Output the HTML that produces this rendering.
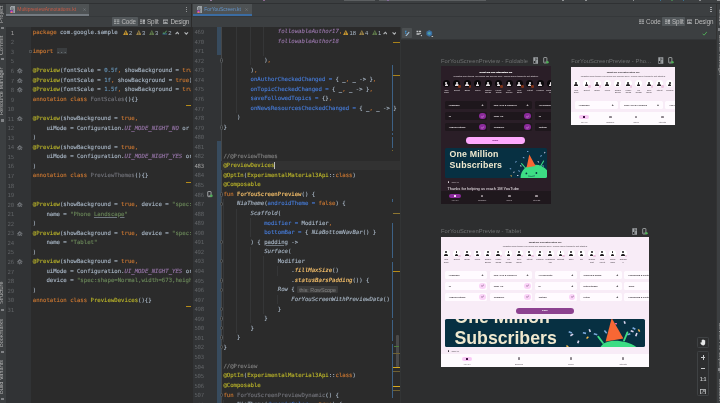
<!DOCTYPE html>
<html lang="en"><head><meta charset="utf-8"><title>ForYouScreen.kt - Multipreview</title>
<style>
html,body{margin:0;padding:0}
body{width:720px;height:403px;overflow:hidden;background:#2b2b2b;position:relative;font-family:"Liberation Sans",sans-serif;color:#bbbbbb}
.abs{position:absolute}
div,span,svg{box-sizing:border-box}
.code{position:absolute;white-space:pre;margin-top:.3px;font-family:"DejaVu Sans Mono","Liberation Mono",monospace;font-size:5.65px;line-height:9.555px;height:9.555px;color:#a9b7c6;letter-spacing:0;-webkit-text-stroke:.12px}
.ln{position:absolute;white-space:pre;font-family:"DejaVu Sans Mono","Liberation Mono",monospace;font-size:5.65px;line-height:9.555px;height:9.555px;color:#606366;text-align:right;margin-top:1px;letter-spacing:-.25px}
.k{color:#cc7832}.a{color:#bbb529}.n{color:#6897bb}.s{color:#6a8759}.c{color:#808080}
.p{color:#9876aa;font-style:italic}.f{color:#ffc66d}.b{color:#467cda}.u{color:#72737a}
.i{font-style:italic}.e{color:#ffc66d;font-style:italic}
.ul{text-decoration:underline;text-decoration-thickness:.35px;text-underline-offset:.8px;text-decoration-color:rgba(169,183,198,.55)}
.fold{background:#3a3d3f;color:#808a8f}
.h{background:#3b3b3b;color:#787878;font-family:"Liberation Sans",sans-serif;font-size:5.3px;border-radius:1px;padding:.6px 1.8px;margin-left:2.6px}
.ui{position:absolute;white-space:pre;font-family:"Liberation Sans",sans-serif;font-size:6.3px;line-height:8px;color:#bbbbbb;letter-spacing:-.14px}
.vt{position:absolute;white-space:pre;font-family:"Liberation Sans",sans-serif;font-size:5.6px;line-height:6px;color:#b4b4b4;transform-origin:0 0;transform:rotate(-90deg)}
.vtr{position:absolute;white-space:pre;font-family:"Liberation Sans",sans-serif;font-size:5.6px;line-height:6px;color:#aaaaaa;transform-origin:0 0;transform:rotate(90deg)}
.pv{position:absolute;overflow:hidden}
.pl{position:absolute;white-space:pre;font-family:"Liberation Sans",sans-serif;font-size:5.75px;line-height:8px;color:#6f7172;letter-spacing:.1px}
.tx{position:absolute;white-space:pre;font-family:"Liberation Sans",sans-serif}
.card{position:absolute;border-radius:1.6px}
.av{position:absolute;border-radius:50%;width:7px;height:7px;overflow:hidden}
.av i{position:absolute;left:2.35px;top:1.3px;width:1.9px;height:1.9px;border-radius:50%}
.av b{position:absolute;left:1.5px;top:3.6px;width:3.6px;height:2px;border-radius:1.6px 1.6px .3px .3px}
.dk .av{background:#0b090b}.dk .av i,.dk .av b{background:#ece6ea}
.lt .av{background:#ffffff}.lt .av i,.lt .av b{background:#1d1a1d}
.nm{position:absolute;white-space:pre;font-family:"Liberation Sans",sans-serif;font-size:2.15px;line-height:2.6px;text-align:center;width:10px}
.dk .nm{color:#f1e9ee}.lt .nm{color:#3a333a}
.ct{position:absolute;white-space:pre;font-family:"Liberation Sans",sans-serif;font-size:2.3px;line-height:3px;font-weight:bold;margin-top:.4px}
.dk .ct{color:#f4edf2}.lt .ct{color:#3b343b}
.ck{position:absolute;border-radius:50%;width:6.4px;height:6.4px}
</style></head><body><div id="root" style="position:absolute;left:0;top:0;width:720px;height:403px;transform:translateZ(0);will-change:transform">
<div class="abs" style="left:0;top:0;width:720px;height:27px;background:#3c3f41"></div><div class="abs" style="left:0;top:2.8px;width:720px;height:.8px;background:#2f3133"></div><div class="abs" style="left:0;top:15.8px;width:720px;height:.6px;background:#35383a"></div><div class="abs" style="left:344px;top:0;width:31px;height:1.2px;background:#4a4d4f;border-bottom:.5px solid #5c5f61"></div><div class="abs" style="left:379px;top:0;width:107px;height:1.2px;background:#4a4d4f;border-bottom:.5px solid #5c5f61"></div><div class="abs" style="left:210.2px;top:0;width:1.5px;height:.9px;background:#d6a6dc;opacity:.6"></div><div class="abs" style="left:263.2px;top:0;width:1.5px;height:.9px;background:#c486c8;opacity:.6"></div><div class="abs" style="left:387.2px;top:0;width:1.5px;height:.9px;background:#a070c0;opacity:.6"></div><div class="abs" style="left:562.2px;top:0;width:1.5px;height:.9px;background:#c8cacc;opacity:.6"></div><div class="abs" style="left:585.2px;top:0;width:1.5px;height:.9px;background:#c8cacc;opacity:.6"></div><div class="abs" style="left:632.7px;top:0;width:1.5px;height:.9px;background:#c8cacc;opacity:.6"></div><div class="abs" style="left:659.8000000000001px;top:0;width:1.5px;height:.9px;background:#3592c4;opacity:.6"></div><div class="abs" style="left:671.2px;top:0;width:1.5px;height:.9px;background:#499c54;opacity:.6"></div><div class="abs" style="left:682.7px;top:0;width:1.5px;height:.9px;background:#3592c4;opacity:.6"></div><div class="abs" style="left:699.2px;top:0;width:1.5px;height:.9px;background:#c8cacc;opacity:.6"></div><div class="abs" style="left:716.5px;top:0;width:3.5px;height:1px;background:#c8cacc;opacity:.6"></div><div class="abs" style="left:0;top:3.5px;width:5.5px;height:400px;background:#3c3f41;overflow:hidden"><div class="vt" style="left:-1.6px;top:19.0px">Project</div><div class="vt" style="left:-1.6px;top:51.0px">Commit</div><div class="vt" style="left:-1.6px;top:111.0px">Resource Manager</div><div class="vt" style="left:-1.6px;top:300.5px">Structure</div><div class="vt" style="left:-1.6px;top:343.5px">Bookmarks</div><div class="vt" style="left:-1.6px;top:390.5px">Build Variants</div><div class="abs" style="left:.5px;top:23.1px;width:3.6px;height:2.8px;background:#9da0a2;opacity:.7"></div><div class="abs" style="left:.5px;top:54.0px;width:3.6px;height:2.8px;background:#9da0a2;opacity:.7"></div><div class="abs" style="left:.5px;top:115.5px;width:3.6px;height:2.8px;background:#9da0a2;opacity:.7"></div><div class="abs" style="left:.5px;top:305.0px;width:3.6px;height:2.8px;background:#9da0a2;opacity:.7"></div><div class="abs" style="left:.5px;top:347.0px;width:3.6px;height:2.8px;background:#9da0a2;opacity:.7"></div><div class="abs" style="left:.5px;top:394.0px;width:3.6px;height:2.8px;background:#9da0a2;opacity:.7"></div></div><div class="abs" style="left:716.3px;top:3.5px;width:3.7px;height:400px;background:#3c3f41;border-left:.6px solid #323232;overflow:hidden"><div class="vtr" style="left:7px;top:5.5px">Gradle</div><div class="vtr" style="left:7px;top:31px">Device Manager</div><div class="vtr" style="left:7px;top:319px">Device File Explorer</div><div class="vtr" style="left:7px;top:375px">Emulator</div><div class="abs" style="left:1px;top:24.5px;width:2.6px;height:2.6px;background:#9da0a2;opacity:.7"></div><div class="abs" style="left:1px;top:364.5px;width:2.6px;height:2.6px;background:#9da0a2;opacity:.7"></div></div><div class="abs" style="left:5.5px;top:3.6px;width:83.7px;height:12.4px;background:#4e5254"></div><div class="abs" style="left:5.5px;top:14.2px;width:83.7px;height:1.8px;background:#747a80"></div><svg class="abs" style="left:9.8px;top:5.6px" width="5.4" height="7.6" viewBox="0 0 11 15"><path d="M3 0h8v15H0V3z" fill="#9aa0a4"/><path d="M0 3 3 0v3z" fill="#c9cdd0"/><path d="M2 2.8h3.600v1.400H2zM2 5.600h6v1.200H2z" fill="#5a5e61"/><rect x="0" y="8" width="6.5" height="7" fill="#3c3f41"/><path d="M.6 8.800h5v5h-5z" fill="#c34ddc"/><path d="M.6 13.800 3.200 11.200 5.600 13.800z" fill="#f28b3d"/></svg><div class="ui" style="left:17.3px;top:5.5px;font-size:4.95px;letter-spacing:0;color:#c75a45">MultipreviewAnnotations.kt</div><svg class="abs" style="left:82.60000000000001px;top:8px" width="3.2" height="3.2" viewBox="0 0 8 8"><path d="M1 1l6 6M7 1 1 7" stroke="#7e8385" stroke-width="1.3" fill="none"/></svg><div class="abs" style="left:192.5px;top:3.6px;width:59.5px;height:12.4px;background:#4e5254"></div><div class="abs" style="left:192.5px;top:14.2px;width:59.5px;height:1.8px;background:#3b6ca2"></div><svg class="abs" style="left:196.8px;top:5.6px" width="5.4" height="7.6" viewBox="0 0 11 15"><path d="M3 0h8v15H0V3z" fill="#9aa0a4"/><path d="M0 3 3 0v3z" fill="#c9cdd0"/><path d="M2 2.8h3.600v1.400H2zM2 5.600h6v1.200H2z" fill="#5a5e61"/><rect x="0" y="8" width="6.5" height="7" fill="#3c3f41"/><path d="M.6 8.800h5v5h-5z" fill="#c34ddc"/><path d="M.6 13.800 3.200 11.200 5.600 13.800z" fill="#f28b3d"/></svg><div class="ui" style="left:204.3px;top:5.5px;font-size:4.95px;letter-spacing:0;color:#6294cb">ForYouScreen.kt</div><svg class="abs" style="left:245.4px;top:8px" width="3.2" height="3.2" viewBox="0 0 8 8"><path d="M1 1l6 6M7 1 1 7" stroke="#7e8385" stroke-width="1.3" fill="none"/></svg><div class="abs" style="left:186.04999999999998px;top:6.6px;width:1.1px;height:1.1px;border-radius:50%;background:#afb1b3"></div><div class="abs" style="left:186.04999999999998px;top:8.8px;width:1.1px;height:1.1px;border-radius:50%;background:#afb1b3"></div><div class="abs" style="left:186.04999999999998px;top:11.0px;width:1.1px;height:1.1px;border-radius:50%;background:#afb1b3"></div><div class="abs" style="left:710.45px;top:6.6px;width:1.1px;height:1.1px;border-radius:50%;background:#afb1b3"></div><div class="abs" style="left:710.45px;top:8.8px;width:1.1px;height:1.1px;border-radius:50%;background:#afb1b3"></div><div class="abs" style="left:710.45px;top:11.0px;width:1.1px;height:1.1px;border-radius:50%;background:#afb1b3"></div><div class="abs" style="left:111.80000000000001px;top:16.8px;width:25.799999999999983px;height:9.4px;background:#53585b;border-radius:.8px"></div><svg class="abs" style="left:114.4px;top:18.7px" width="5.4" height="5.4" viewBox="0 0 10 10"><path d="M0 1h10v1.600H0zM0 4.200h10v1.600H0zM0 7.400h10v1.600H0z" fill="#afb1b3"/><path d="M4.400 1h1.200v8H4.400z" fill="#4c5052"/></svg><div class="ui" style="left:121.4px;top:18px">Code</div><svg class="abs" style="left:140px;top:18.7px" width="5.4" height="5.4" viewBox="0 0 10 10"><path d="M0 1h4v1.600H0zM0 4.200h4v1.600H0zM0 7.400h4v1.600H0z" fill="#afb1b3"/><rect x="5" y="1" width="5" height="8" fill="#afb1b3"/><path d="M6.200 6.800 7.600 4.400l1.400 2.400z" fill="#4c5052"/></svg><div class="ui" style="left:147px;top:18px">Split</div><svg class="abs" style="left:163px;top:18.7px" width="5.4" height="5.4" viewBox="0 0 10 10"><rect x="0" y="1" width="10" height="8" fill="#afb1b3"/><rect x="1.2" y="3" width="7.600" height="4.800" fill="#3c3f41"/><path d="M1.600 7.800 4 4.400l1.700 2.200 1-1.100 1.900 2.300z" fill="#afb1b3"/></svg><div class="ui" style="left:170.4px;top:18px">Design</div><div class="abs" style="left:662px;top:16.8px;width:23.200000000000045px;height:9.4px;background:#53585b;border-radius:.8px"></div><svg class="abs" style="left:638.6px;top:18.7px" width="5.4" height="5.4" viewBox="0 0 10 10"><path d="M0 1h10v1.600H0zM0 4.200h10v1.600H0zM0 7.400h10v1.600H0z" fill="#afb1b3"/><path d="M4.400 1h1.200v8H4.400z" fill="#4c5052"/></svg><div class="ui" style="left:646px;top:18px">Code</div><svg class="abs" style="left:665px;top:18.7px" width="5.4" height="5.4" viewBox="0 0 10 10"><path d="M0 1h4v1.600H0zM0 4.200h4v1.600H0zM0 7.400h4v1.600H0z" fill="#afb1b3"/><rect x="5" y="1" width="5" height="8" fill="#afb1b3"/><path d="M6.200 6.800 7.600 4.400l1.400 2.400z" fill="#4c5052"/></svg><div class="ui" style="left:672px;top:18px">Split</div><svg class="abs" style="left:687px;top:18.7px" width="5.4" height="5.4" viewBox="0 0 10 10"><rect x="0" y="1" width="10" height="8" fill="#afb1b3"/><rect x="1.2" y="3" width="7.600" height="4.800" fill="#3c3f41"/><path d="M1.600 7.800 4 4.400l1.700 2.200 1-1.100 1.900 2.300z" fill="#afb1b3"/></svg><div class="ui" style="left:694.6px;top:18px">Design</div><div class="abs" style="left:5.5px;top:27px;width:185.7px;height:376px;background:#2b2b2b;overflow:hidden"><div class="abs" style="left:0;top:0;width:25px;height:376px;background:#313335"></div><div class="ln" style="left:0;top:0.72px;width:8.3px;color:#a4a3a3">1</div><div class="code" style="left:27.3px;top:0.72px"><span class="k">package</span> com.google.sample</div><div class="ln" style="left:0;top:10.28px;width:8.3px;color:#606366">2</div><div class="ln" style="left:0;top:19.83px;width:8.3px;color:#606366">3</div><div class="code" style="left:27.3px;top:19.83px"><span class="k">import</span> <span class="fold">...</span></div><div class="ln" style="left:0;top:29.39px;width:8.3px;color:#606366">5</div><div class="ln" style="left:0;top:38.94px;width:8.3px;color:#606366">6</div><svg class="abs" style="left:11.60px;top:41.12px" width="5.6" height="5.6" viewBox="0 0 12 12"><g fill="none" stroke="#959a9f"><circle cx="6" cy="6" r="2.7" stroke-width="1.5"/><path stroke-width="1.7" d="M6 .4v2.200M6 9.400v2.200M.4 6h2.200M9.400 6h2.200M2 2l1.500 1.500M8.500 8.500 10 10M2 10l1.500-1.500M8.500 3.500 10 2"/></g></svg><div class="code" style="left:27.3px;top:38.94px"><span class="a">@Preview</span>(fontScale = <span class="n">0.5f</span><span class="k">,</span> showBackground = <span class="k">true</span>)</div><div class="ln" style="left:0;top:48.50px;width:8.3px;color:#606366">7</div><svg class="abs" style="left:11.60px;top:50.68px" width="5.6" height="5.6" viewBox="0 0 12 12"><g fill="none" stroke="#959a9f"><circle cx="6" cy="6" r="2.7" stroke-width="1.5"/><path stroke-width="1.7" d="M6 .4v2.200M6 9.400v2.200M.4 6h2.200M9.400 6h2.200M2 2l1.500 1.500M8.500 8.500 10 10M2 10l1.500-1.500M8.500 3.500 10 2"/></g></svg><div class="code" style="left:27.3px;top:48.50px"><span class="a">@Preview</span>(fontScale = <span class="n">1f</span><span class="k">,</span> showBackground = <span class="k">true</span>)</div><div class="ln" style="left:0;top:58.05px;width:8.3px;color:#606366">8</div><svg class="abs" style="left:11.60px;top:60.23px" width="5.6" height="5.6" viewBox="0 0 12 12"><g fill="none" stroke="#959a9f"><circle cx="6" cy="6" r="2.7" stroke-width="1.5"/><path stroke-width="1.7" d="M6 .4v2.200M6 9.400v2.200M.4 6h2.200M9.400 6h2.200M2 2l1.500 1.500M8.500 8.500 10 10M2 10l1.500-1.500M8.500 3.500 10 2"/></g></svg><div class="code" style="left:27.3px;top:58.05px"><span class="a">@Preview</span>(fontScale = <span class="n">1.5f</span><span class="k">,</span> showBackground = <span class="k">true</span>)</div><div class="ln" style="left:0;top:67.61px;width:8.3px;color:#606366">9</div><div class="code" style="left:27.3px;top:67.61px"><span class="k">annotation class </span><span class="u">FontScales</span>(){}</div><div class="ln" style="left:0;top:77.16px;width:8.3px;color:#606366">10</div><div class="ln" style="left:0;top:86.72px;width:8.3px;color:#606366">11</div><svg class="abs" style="left:11.60px;top:88.90px" width="5.6" height="5.6" viewBox="0 0 12 12"><g fill="none" stroke="#959a9f"><circle cx="6" cy="6" r="2.7" stroke-width="1.5"/><path stroke-width="1.7" d="M6 .4v2.200M6 9.400v2.200M.4 6h2.200M9.400 6h2.200M2 2l1.500 1.500M8.500 8.500 10 10M2 10l1.500-1.500M8.500 3.500 10 2"/></g></svg><div class="code" style="left:27.3px;top:86.72px"><span class="a">@Preview</span>(showBackground = <span class="k">true,</span></div><div class="ln" style="left:0;top:96.27px;width:8.3px;color:#606366">12</div><div class="code" style="left:27.3px;top:96.27px">    uiMode = Configuration.<span class="p">UI_MODE_NIGHT_NO</span> or Configuration.<span class="p">UI_MODE_TYPE_NORMAL</span></div><div class="ln" style="left:0;top:105.83px;width:8.3px;color:#606366">13</div><div class="code" style="left:27.3px;top:105.83px">)</div><div class="ln" style="left:0;top:115.38px;width:8.3px;color:#606366">14</div><svg class="abs" style="left:11.60px;top:117.56px" width="5.6" height="5.6" viewBox="0 0 12 12"><g fill="none" stroke="#959a9f"><circle cx="6" cy="6" r="2.7" stroke-width="1.5"/><path stroke-width="1.7" d="M6 .4v2.200M6 9.400v2.200M.4 6h2.200M9.400 6h2.200M2 2l1.500 1.500M8.500 8.500 10 10M2 10l1.500-1.500M8.500 3.500 10 2"/></g></svg><div class="code" style="left:27.3px;top:115.38px"><span class="a">@Preview</span>(showBackground = <span class="k">true,</span></div><div class="ln" style="left:0;top:124.94px;width:8.3px;color:#606366">15</div><div class="code" style="left:27.3px;top:124.94px">    uiMode = Configuration.<span class="p">UI_MODE_NIGHT_YES</span> or Configuration.<span class="p">UI_MODE_TYPE_NORMAL</span></div><div class="ln" style="left:0;top:134.49px;width:8.3px;color:#606366">16</div><div class="code" style="left:27.3px;top:134.49px">)</div><div class="ln" style="left:0;top:144.05px;width:8.3px;color:#606366">17</div><div class="code" style="left:27.3px;top:144.05px"><span class="k">annotation class </span><span class="u">PreviewThemes</span>(){}</div><div class="ln" style="left:0;top:153.60px;width:8.3px;color:#606366">18</div><div class="ln" style="left:0;top:163.16px;width:8.3px;color:#606366">19</div><div class="ln" style="left:0;top:172.71px;width:8.3px;color:#606366">20</div><svg class="abs" style="left:11.60px;top:174.89px" width="5.6" height="5.6" viewBox="0 0 12 12"><g fill="none" stroke="#959a9f"><circle cx="6" cy="6" r="2.7" stroke-width="1.5"/><path stroke-width="1.7" d="M6 .4v2.200M6 9.400v2.200M.4 6h2.200M9.400 6h2.200M2 2l1.500 1.500M8.500 8.500 10 10M2 10l1.500-1.500M8.500 3.500 10 2"/></g></svg><div class="code" style="left:27.3px;top:172.71px"><span class="a">@Preview</span>(showBackground = <span class="k">true,</span> device = <span class="s">"spec:shape=Normal,width=673,height=841,unit=dp,dpi=480"</span><span class="k">,</span></div><div class="ln" style="left:0;top:182.27px;width:8.3px;color:#606366">21</div><div class="code" style="left:27.3px;top:182.27px">    name = <span class="s">"Phone </span><span class="s ul">Landscape</span><span class="s">"</span></div><div class="ln" style="left:0;top:191.82px;width:8.3px;color:#606366">22</div><div class="code" style="left:27.3px;top:191.82px">)</div><div class="ln" style="left:0;top:201.38px;width:8.3px;color:#606366">23</div><svg class="abs" style="left:11.60px;top:203.55px" width="5.6" height="5.6" viewBox="0 0 12 12"><g fill="none" stroke="#959a9f"><circle cx="6" cy="6" r="2.7" stroke-width="1.5"/><path stroke-width="1.7" d="M6 .4v2.200M6 9.400v2.200M.4 6h2.200M9.400 6h2.200M2 2l1.500 1.500M8.500 8.500 10 10M2 10l1.500-1.500M8.500 3.500 10 2"/></g></svg><div class="code" style="left:27.3px;top:201.38px"><span class="a">@Preview</span>(showBackground = <span class="k">true,</span> device = <span class="s">"spec:shape=Normal,width=1280,height=800,unit=dp,dpi=480"</span><span class="k">,</span></div><div class="ln" style="left:0;top:210.93px;width:8.3px;color:#606366">24</div><div class="code" style="left:27.3px;top:210.93px">    name = <span class="s">"Tablet"</span></div><div class="ln" style="left:0;top:220.49px;width:8.3px;color:#606366">25</div><div class="code" style="left:27.3px;top:220.49px">)</div><div class="ln" style="left:0;top:230.04px;width:8.3px;color:#606366">26</div><svg class="abs" style="left:11.60px;top:232.22px" width="5.6" height="5.6" viewBox="0 0 12 12"><g fill="none" stroke="#959a9f"><circle cx="6" cy="6" r="2.7" stroke-width="1.5"/><path stroke-width="1.7" d="M6 .4v2.200M6 9.400v2.200M.4 6h2.200M9.400 6h2.200M2 2l1.500 1.500M8.500 8.500 10 10M2 10l1.500-1.500M8.500 3.500 10 2"/></g></svg><div class="code" style="left:27.3px;top:230.04px"><span class="a">@Preview</span>(showBackground = <span class="k">true,</span></div><div class="ln" style="left:0;top:239.60px;width:8.3px;color:#606366">27</div><div class="code" style="left:27.3px;top:239.60px">    uiMode = Configuration.<span class="p">UI_MODE_NIGHT_YES</span> or Configuration.<span class="p">UI_MODE_TYPE_NORMAL</span><span class="k">,</span></div><div class="ln" style="left:0;top:249.15px;width:8.3px;color:#606366">28</div><div class="code" style="left:27.3px;top:249.15px">    device = <span class="s">"spec:shape=Normal,width=673,height=841,unit=dp,dpi=480"</span><span class="k">,</span></div><div class="ln" style="left:0;top:258.71px;width:8.3px;color:#606366">29</div><div class="code" style="left:27.3px;top:258.71px">)</div><div class="ln" style="left:0;top:268.26px;width:8.3px;color:#606366">30</div><div class="code" style="left:27.3px;top:268.26px"><span class="k">annotation class </span><span class="a">PreviewDevices</span>(){}</div><div class="ln" style="left:0;top:277.82px;width:8.3px;color:#606366">31</div><div class="abs" style="left:23.6px;top:23.21px;width:2.8px;height:2.8px;border:.5px solid #4d5052;background:#2b2b2b"></div><div class="abs" style="left:114px;top:.6px;width:72px;height:9.6px;background:#2b2b2b"></div><svg class="abs" style="left:117px;top:3.1px" width="5.6" height="5.2" viewBox="0 0 12 11"><path d="M6 0 12 11H0z" fill="#c9982f"/><path d="M5.300 3.600h1.400v3.800H5.300zM5.300 8.200h1.400v1.400H5.300z" fill="#2b2b2b"/></svg><div class="ui" style="left:123.4px;top:1.5px;font-size:5.9px;letter-spacing:0;color:#a9b7c6">2</div><svg class="abs" style="left:130px;top:3.1px" width="5.6" height="5.2" viewBox="0 0 12 11"><path d="M6 0 12 11H0z" fill="#9a8246"/><path d="M5.300 3.600h1.400v3.800H5.300zM5.300 8.200h1.400v1.400H5.300z" fill="#2b2b2b"/></svg><div class="ui" style="left:136.6px;top:1.5px;font-size:5.9px;letter-spacing:0;color:#a9b7c6">3</div><svg class="abs" style="left:143px;top:3.1px" width="5.6" height="5.2" viewBox="0 0 12 11"><path d="M6 0 12 11H0z" fill="#5f7a4a"/><path d="M5.300 3.600h1.400v3.800H5.300zM5.300 8.200h1.400v1.400H5.300z" fill="#2b2b2b"/></svg><div class="ui" style="left:149.6px;top:1.5px;font-size:5.9px;letter-spacing:0;color:#a9b7c6">3</div><svg class="abs" style="left:156.4px;top:2.6px" width="5.4" height="5.4" viewBox="0 0 12 12"><path d="M1 8h10v1.600H1z" fill="#3e8ed0"/><path d="M2 5.500 4.800 8.200 10.500 1.500" stroke="#5fb865" stroke-width="1.9" fill="none"/></svg><div class="ui" style="left:162.8px;top:1.5px;font-size:5.9px;letter-spacing:0;color:#a9b7c6">2</div><svg class="abs" style="left:169.4px;top:3.6px" width="4.6" height="4.6" viewBox="0 0 8 8"><path d="M1 5.500 4 2.500 7 5.500" stroke="#b0b3b5" stroke-width="2" fill="none"/></svg><svg class="abs" style="left:178.8px;top:3.6px" width="4.6" height="4.6" viewBox="0 0 8 8"><path d="M1 2.500 4 5.500 7 2.500" stroke="#b0b3b5" stroke-width="2" fill="none"/></svg><div class="abs" style="left:180px;top:78.2px;width:5.7px;height:.9px;background:#b58b18"></div><div class="abs" style="left:180px;top:155.1px;width:5.7px;height:.9px;background:#b58b18"></div><div class="abs" style="left:180px;top:278.5px;width:5.7px;height:.9px;background:#b58b18"></div></div><div class="abs" style="left:191.2px;top:3.5px;width:1.3px;height:400px;background:#2b2b2b"></div><div class="abs" style="left:192.5px;top:27px;width:207.5px;height:376px;background:#2b2b2b;overflow:hidden"><div class="abs" style="left:0;top:0;width:28.4px;height:376px;background:#313335"></div><div class="abs" style="left:28.4px;top:0;width:.5px;height:376px;background:#454749"></div><div class="abs" style="left:24.5px;top:0;width:3.5px;height:28.3px;background:#374b5e"></div><div class="abs" style="left:24.5px;top:114px;width:3.5px;height:262px;background:#374b5e"></div><div class="abs" style="left:28.9px;top:133.89px;width:180px;height:9.555px;background:#323232"></div><div class="abs" style="left:43.70px;top:-9.43px;width:.5px;height:95.55px;background:#353637"></div><div class="abs" style="left:57.30px;top:-9.43px;width:.5px;height:47.77px;background:#353637"></div><div class="abs" style="left:70.90px;top:-9.43px;width:.5px;height:38.22px;background:#353637"></div><div class="abs" style="left:30.10px;top:172.11px;width:.5px;height:143.32px;background:#353637"></div><div class="abs" style="left:43.70px;top:181.67px;width:.5px;height:124.22px;background:#353637"></div><div class="abs" style="left:57.30px;top:191.22px;width:.5px;height:19.11px;background:#353637"></div><div class="abs" style="left:57.30px;top:219.89px;width:.5px;height:76.44px;background:#353637"></div><div class="abs" style="left:70.90px;top:229.44px;width:.5px;height:57.33px;background:#353637"></div><div class="abs" style="left:84.50px;top:239.00px;width:.5px;height:9.55px;background:#353637"></div><div class="abs" style="left:84.50px;top:267.66px;width:.5px;height:9.55px;background:#353637"></div><div class="abs" style="left:30.10px;top:372.77px;width:.5px;height:19.11px;background:#353637"></div><div class="ln" style="left:0;top:0.12px;width:11.4px;color:#606366">469</div><div class="code" style="left:30.9px;top:0.12px">                <span class="p">followableAuthor17</span><span class="k">,</span></div><div class="ln" style="left:0;top:9.68px;width:11.4px;color:#606366">470</div><div class="code" style="left:30.9px;top:9.68px">                <span class="p">followableAuthor18</span></div><div class="ln" style="left:0;top:19.23px;width:11.4px;color:#606366">471</div><div class="ln" style="left:0;top:28.79px;width:11.4px;color:#606366">472</div><div class="code" style="left:30.9px;top:28.79px">            )<span class="k">,</span></div><div class="ln" style="left:0;top:38.34px;width:11.4px;color:#606366">473</div><div class="code" style="left:30.9px;top:38.34px">        )<span class="k">,</span></div><div class="ln" style="left:0;top:47.90px;width:11.4px;color:#606366">474</div><div class="code" style="left:30.9px;top:47.90px">        <span class="b">onAuthorCheckedChanged =</span> { _<span class="k">,</span> _ -&gt; }<span class="k">,</span></div><div class="ln" style="left:0;top:57.45px;width:11.4px;color:#606366">475</div><div class="code" style="left:30.9px;top:57.45px">        <span class="b">onTopicCheckedChanged =</span> { _<span class="k">,</span> _ -&gt; }<span class="k">,</span></div><div class="ln" style="left:0;top:67.01px;width:11.4px;color:#606366">476</div><div class="code" style="left:30.9px;top:67.01px">        <span class="b">saveFollowedTopics =</span> {}<span class="k">,</span></div><div class="ln" style="left:0;top:76.56px;width:11.4px;color:#606366">477</div><div class="code" style="left:30.9px;top:76.56px">        <span class="b">onNewsResourcesCheckedChanged =</span> { _<span class="k">,</span> _ -&gt; }</div><div class="ln" style="left:0;top:86.12px;width:11.4px;color:#606366">478</div><div class="code" style="left:30.9px;top:86.12px">    )</div><div class="ln" style="left:0;top:95.67px;width:11.4px;color:#606366">479</div><div class="code" style="left:30.9px;top:95.67px">}</div><div class="ln" style="left:0;top:105.23px;width:11.4px;color:#606366">480</div><div class="ln" style="left:0;top:114.78px;width:11.4px;color:#606366">481</div><div class="ln" style="left:0;top:124.34px;width:11.4px;color:#606366">482</div><div class="code" style="left:30.9px;top:124.34px"><span class="c">//@PreviewThemes</span></div><div class="ln" style="left:0;top:133.89px;width:11.4px;color:#a4a3a3">483</div><div class="code" style="left:30.9px;top:133.89px"><span class="a">@PreviewDevices</span></div><div class="ln" style="left:0;top:143.45px;width:11.4px;color:#606366">484</div><div class="code" style="left:30.9px;top:143.45px"><span class="a">@OptIn</span>(<span class="a">ExperimentalMaterial3Api</span>::<span class="k">class</span>)</div><div class="ln" style="left:0;top:153.00px;width:11.4px;color:#606366">485</div><div class="code" style="left:30.9px;top:153.00px"><span class="a">@Composable</span></div><div class="ln" style="left:0;top:162.56px;width:11.4px;color:#606366">486</div><div class="code" style="left:30.9px;top:162.56px"><span class="k">fun </span><span class="f">ForYouScreenPreview</span>() {</div><div class="ln" style="left:0;top:172.11px;width:11.4px;color:#606366">487</div><div class="code" style="left:30.9px;top:172.11px">    <span class="i">NiaTheme</span>(<span class="b">androidTheme =</span> <span class="k">false</span>) {</div><div class="ln" style="left:0;top:181.67px;width:11.4px;color:#606366">488</div><div class="code" style="left:30.9px;top:181.67px">        <span class="i">Scaffold</span>(</div><div class="ln" style="left:0;top:191.22px;width:11.4px;color:#606366">489</div><div class="code" style="left:30.9px;top:191.22px">            <span class="b">modifier =</span> Modifier<span class="k">,</span></div><div class="ln" style="left:0;top:200.78px;width:11.4px;color:#606366">490</div><div class="code" style="left:30.9px;top:200.78px">            <span class="b">bottomBar =</span> { <span class="i">NiaBottomNavBar</span>() }</div><div class="ln" style="left:0;top:210.33px;width:11.4px;color:#606366">491</div><div class="code" style="left:30.9px;top:210.33px">        ) { <span class="ul">padding</span> -&gt;</div><div class="ln" style="left:0;top:219.89px;width:11.4px;color:#606366">492</div><div class="code" style="left:30.9px;top:219.89px">            <span class="i">Surface</span>(</div><div class="ln" style="left:0;top:229.44px;width:11.4px;color:#606366">493</div><div class="code" style="left:30.9px;top:229.44px">                Modifier</div><div class="ln" style="left:0;top:239.00px;width:11.4px;color:#606366">494</div><div class="code" style="left:30.9px;top:239.00px">                    .<span class="e">fillMaxSize</span>()</div><div class="ln" style="left:0;top:248.55px;width:11.4px;color:#606366">495</div><div class="code" style="left:30.9px;top:248.55px">                    .<span class="e">statusBarsPadding</span>()) {</div><div class="ln" style="left:0;top:258.11px;width:11.4px;color:#606366">496</div><div class="code" style="left:30.9px;top:258.11px">                <span class="i">Row</span> {<span class="h">this: RowScope</span></div><div class="ln" style="left:0;top:267.66px;width:11.4px;color:#606366">497</div><div class="code" style="left:30.9px;top:267.66px">                    <span class="i">ForYouScreenWithPreviewData</span>()</div><div class="ln" style="left:0;top:277.22px;width:11.4px;color:#606366">498</div><div class="code" style="left:30.9px;top:277.22px">                }</div><div class="ln" style="left:0;top:286.77px;width:11.4px;color:#606366">499</div><div class="code" style="left:30.9px;top:286.77px">            }</div><div class="ln" style="left:0;top:296.33px;width:11.4px;color:#606366">500</div><div class="code" style="left:30.9px;top:296.33px">        }</div><div class="ln" style="left:0;top:305.88px;width:11.4px;color:#606366">501</div><div class="code" style="left:30.9px;top:305.88px">    }</div><div class="ln" style="left:0;top:315.44px;width:11.4px;color:#606366">502</div><div class="code" style="left:30.9px;top:315.44px">}</div><div class="ln" style="left:0;top:324.99px;width:11.4px;color:#606366">503</div><div class="ln" style="left:0;top:334.55px;width:11.4px;color:#606366">504</div><div class="code" style="left:30.9px;top:334.55px"><span class="c">//@Preview</span></div><div class="ln" style="left:0;top:344.10px;width:11.4px;color:#606366">505</div><div class="code" style="left:30.9px;top:344.10px"><span class="a">@OptIn</span>(<span class="a">ExperimentalMaterial3Api</span>::<span class="k">class</span>)</div><div class="ln" style="left:0;top:353.66px;width:11.4px;color:#606366">506</div><div class="code" style="left:30.9px;top:353.66px"><span class="a">@Composable</span></div><div class="ln" style="left:0;top:363.21px;width:11.4px;color:#606366">507</div><div class="code" style="left:30.9px;top:363.21px"><span class="k">fun </span><span class="u">ForYouScreenPreviewDynamic</span>() {</div><div class="ln" style="left:0;top:372.77px;width:11.4px;color:#606366">508</div><div class="code" style="left:30.9px;top:372.77px">    <span class="i">NiaTheme</span>(<span class="b">dynamicColor =</span> <span class="k">true</span>) {</div><div class="abs" style="left:81.90px;top:135.09px;width:.6px;height:7px;background:#bbbbbb"></div><div class="abs" style="left:27px;top:31.36px;width:3.2px;height:4.4px;border:.5px solid #595c5e;border-radius:1.5px;background:#2b2b2b"></div><div class="abs" style="left:27px;top:98.25px;width:3.2px;height:4.4px;border:.5px solid #595c5e;border-radius:1.5px;background:#2b2b2b"></div><div class="abs" style="left:27px;top:165.14px;width:3.2px;height:4.4px;border:.5px solid #595c5e;border-radius:1.5px;background:#2b2b2b"></div><div class="abs" style="left:27px;top:174.69px;width:3.2px;height:4.4px;border:.5px solid #595c5e;border-radius:1.5px;background:#2b2b2b"></div><div class="abs" style="left:27px;top:212.91px;width:3.2px;height:4.4px;border:.5px solid #595c5e;border-radius:1.5px;background:#2b2b2b"></div><div class="abs" style="left:27px;top:232.02px;width:3.2px;height:4.4px;border:.5px solid #595c5e;border-radius:1.5px;background:#2b2b2b"></div><div class="abs" style="left:27px;top:251.13px;width:3.2px;height:4.4px;border:.5px solid #595c5e;border-radius:1.5px;background:#2b2b2b"></div><div class="abs" style="left:27px;top:260.69px;width:3.2px;height:4.4px;border:.5px solid #595c5e;border-radius:1.5px;background:#2b2b2b"></div><div class="abs" style="left:27px;top:279.79px;width:3.2px;height:4.4px;border:.5px solid #595c5e;border-radius:1.5px;background:#2b2b2b"></div><div class="abs" style="left:27px;top:289.35px;width:3.2px;height:4.4px;border:.5px solid #595c5e;border-radius:1.5px;background:#2b2b2b"></div><div class="abs" style="left:27px;top:298.90px;width:3.2px;height:4.4px;border:.5px solid #595c5e;border-radius:1.5px;background:#2b2b2b"></div><div class="abs" style="left:27px;top:308.46px;width:3.2px;height:4.4px;border:.5px solid #595c5e;border-radius:1.5px;background:#2b2b2b"></div><div class="abs" style="left:27px;top:318.01px;width:3.2px;height:4.4px;border:.5px solid #595c5e;border-radius:1.5px;background:#2b2b2b"></div><div class="abs" style="left:27px;top:365.79px;width:3.2px;height:4.4px;border:.5px solid #595c5e;border-radius:1.5px;background:#2b2b2b"></div><svg class="abs" style="left:14.9px;top:164.03px" width="6" height="6.6" viewBox="0 0 12 13"><rect x="1.5" y=".8" width="6.6" height="10.4" rx="1" fill="none" stroke="#c3c6c8" stroke-width="1.5"/><path d="M3 9.200h3.600" stroke="#c3c6c8" stroke-width="1"/><circle cx="8.8" cy="9.6" r="2.6" fill="#4fae56"/></svg><div class="abs" style="left:148px;top:.6px;width:52px;height:9.8px;background:#2b2b2b"></div><svg class="abs" style="left:150.4px;top:3.1px" width="5.6" height="5.2" viewBox="0 0 12 11"><path d="M6 0 12 11H0z" fill="#c9982f"/><path d="M5.300 3.600h1.400v3.800H5.300zM5.300 8.200h1.400v1.400H5.300z" fill="#2b2b2b"/></svg><div class="ui" style="left:157px;top:1.5px;font-size:5.9px;letter-spacing:0;color:#a9b7c6">18</div><svg class="abs" style="left:166px;top:3.1px" width="5.6" height="5.2" viewBox="0 0 12 11"><path d="M6 0 12 11H0z" fill="#9a8246"/><path d="M5.300 3.600h1.400v3.800H5.300zM5.300 8.200h1.400v1.400H5.300z" fill="#2b2b2b"/></svg><div class="ui" style="left:172.4px;top:1.5px;font-size:5.9px;letter-spacing:0;color:#a9b7c6">4</div><svg class="abs" style="left:179px;top:3.1px" width="5.6" height="5.2" viewBox="0 0 12 11"><path d="M6 0 12 11H0z" fill="#5f7a4a"/><path d="M5.300 3.600h1.400v3.800H5.300zM5.300 8.200h1.400v1.400H5.300z" fill="#2b2b2b"/></svg><div class="ui" style="left:185.4px;top:1.5px;font-size:5.9px;letter-spacing:0;color:#a9b7c6">1</div><svg class="abs" style="left:190.4px;top:3.6px" width="4.6" height="4.6" viewBox="0 0 8 8"><path d="M1 5.500 4 2.500 7 5.500" stroke="#b0b3b5" stroke-width="2" fill="none"/></svg><svg class="abs" style="left:199.2px;top:3.6px" width="4.6" height="4.6" viewBox="0 0 8 8"><path d="M1 2.500 4 5.500 7 2.500" stroke="#b0b3b5" stroke-width="2" fill="none"/></svg><div class="abs" style="left:199.4px;top:38px;width:.7px;height:65.6px;background:#3d6185"></div><div class="abs" style="left:199.4px;top:106px;width:.7px;height:2px;background:#3d6185"></div><div class="abs" style="left:199.4px;top:110px;width:.7px;height:11px;background:#3d6185"></div><div class="abs" style="left:199.4px;top:172px;width:.7px;height:2.5px;background:#3d6185"></div><div class="abs" style="left:199.4px;top:196px;width:.7px;height:34.5px;background:#3d6185"></div><div class="abs" style="left:199.4px;top:235px;width:.7px;height:55.5px;background:#3d6185"></div><div class="abs" style="left:199.4px;top:293px;width:.7px;height:21px;background:#3d6185"></div><div class="abs" style="left:199.4px;top:317px;width:.7px;height:53.60000000000002px;background:#3d6185"></div><div class="abs" style="left:199.4px;top:122.6px;width:.7px;height:1.6px;background:#7a6a2a"></div><div class="abs" style="left:203.2px;top:308px;width:3px;height:32px;background:#4a4a4a;border-radius:1px"></div><div class="abs" style="left:200.6px;top:14.700000000000003px;width:6.9px;height:.9px;background:#a8821a"></div><div class="abs" style="left:200.6px;top:47.5px;width:6.9px;height:.9px;background:#a8821a"></div><div class="abs" style="left:200.6px;top:185.5px;width:6.9px;height:.9px;background:#8d7530"></div><div class="abs" style="left:200.6px;top:243.5px;width:6.9px;height:.9px;background:#b58b18"></div><div class="abs" style="left:200.6px;top:339.9px;width:6.9px;height:.9px;background:#d6a91c"></div><div class="abs" style="left:200.6px;top:344.2px;width:6.9px;height:.9px;background:#6f6133"></div><div class="abs" style="left:200.6px;top:359.0px;width:6.9px;height:.9px;background:#d6a91c"></div><div class="abs" style="left:200.6px;top:362.5px;width:6.9px;height:.9px;background:#6f6133"></div><div class="abs" style="left:200.6px;top:326.0px;width:6.9px;height:.9px;background:#6f6133"></div><div class="abs" style="left:201.4px;top:319px;width:5.6px;height:.9px;background:#4c7a3c"></div></div><div class="abs" style="left:400px;top:27px;width:316.3px;height:376px;background:#2d2e2f"></div><div class="abs" style="left:400px;top:27px;width:316.3px;height:12.6px;background:#3c3f41"></div><div class="abs" style="left:400px;top:39.4px;width:316.3px;height:.5px;background:#333537"></div><div class="abs" style="left:399.6px;top:27px;width:.6px;height:376px;background:#323435"></div><div class="abs" style="left:402.4px;top:28.4px;width:9.4px;height:9.6px;background:#4c5052;border-radius:.8px"></div><svg class="abs" style="left:404.3px;top:30px" width="6" height="6.4" viewBox="0 0 12 13"><path d="M1.500 1.500h4l-2 5z" fill="#3c92d4"/><path d="M3 11.500 9.600 3.600l1.600 1.300L4.600 12.800 2.600 13z" fill="#a9c6de"/><path d="M2 6.600h3v1.300H2z" fill="#3c92d4"/></svg><svg class="abs" style="left:415.8px;top:30.4px" width="6.6" height="6.6" viewBox="0 0 13 13"><path d="M1 1.500h3.400v3H1zM5.600 1.500H10v3H5.600zM1 6h9v1.400H1zM1 8.600h6v1.400H1z" fill="#c3c6c8"/><path d="M9 10h4l-2 2.600z" fill="#c3c6c8"/></svg><svg class="abs" style="left:426px;top:29.8px" width="7.6" height="7.6" viewBox="0 0 15 15"><path d="M6.500 0 12.200 3.300V9.900L6.500 13.200.8 9.900V3.300z" fill="#3a6f9e"/><circle cx="6.5" cy="6.6" r="3.3" fill="#4a8cc0"/><circle cx="6.2" cy="6.4" r="1.3" fill="#58c46a"/><path d="M10.400 12h4.200l-2.100 2.800z" fill="#c3c6c8"/></svg><svg class="abs" style="left:701.6px;top:30.6px" width="5.6" height="5" viewBox="0 0 11 10"><path d="M1 5.400 4 8.400 10 1.400" stroke="#4fa657" stroke-width="2" fill="none"/></svg><div class="pl" style="left:441px;top:56.8px">ForYouScreenPreview - Foldable</div><svg class="abs" style="left:532.6px;top:57.4px" width="5.6" height="7" viewBox="0 0 11 14"><rect x=".5" y=".5" width="10" height="13" fill="#9fa3a6"/><path d="M5 1.5h1.2v11H5z" fill="#2d2e2f"/><circle cx="7.6" cy="4.2" r="1.3" fill="#2d2e2f"/><path d="M1.6 8h2.4v4H1.6z" fill="#2d2e2f"/></svg><svg class="abs" style="left:542.6px;top:57.4px" width="6" height="7" viewBox="0 0 12 14"><rect x="1.4" y="1" width="6.4" height="11" rx="1" fill="none" stroke="#b4b8ba" stroke-width="1.5"/><path d="M3 10h3.2" stroke="#b4b8ba" stroke-width="1"/><circle cx="8.8" cy="10.4" r="2.6" fill="#4fae56"/></svg><div class="pv dk" style="left:441px;top:66.3px;width:110px;height:137.5px;background:#2a1e27"><div class="tx" style="left:0;top:4.700000000000003px;width:110px;text-align:center;font-size:2.5px;line-height:3.6px;font-weight:bold;color:#fff;-webkit-text-stroke:.12px #fff">What are you interested in?</div><div class="tx" style="left:0;top:8.800000000000002px;width:110px;text-align:center;font-size:2.35px;line-height:2.8px;color:#e6dde3">Updates from topics you follow will appear here. Follow some things to get started.</div><div class="av" style="left:2.00px;top:14.20px"><i></i><b></b></div><div class="nm" style="left:0.50px;top:22.30px">Cup<br>Cake</div><div class="av" style="left:12.42px;top:14.20px"><i></i><b></b></div><div class="abs" style="left:17.42px;top:18.70px;width:2.6px;height:2.6px;border-radius:50%;background:#7e3218"></div><div class="nm" style="left:10.92px;top:22.30px">Donut</div><div class="av" style="left:22.84px;top:14.20px"><i></i><b></b></div><div class="abs" style="left:27.84px;top:18.70px;width:2.6px;height:2.6px;border-radius:50%;background:#7e3218"></div><div class="nm" style="left:21.34px;top:22.30px">Eclair</div><div class="av" style="left:33.26px;top:14.20px"><i></i><b></b></div><div class="nm" style="left:31.76px;top:22.30px">Froyo</div><div class="av" style="left:43.68px;top:14.20px"><i></i><b></b></div><div class="nm" style="left:42.18px;top:22.30px">Ginger<br>Bread</div><div class="av" style="left:54.10px;top:14.20px"><i></i><b></b></div><div class="abs" style="left:59.10px;top:18.70px;width:2.6px;height:2.6px;border-radius:50%;background:#7e3218"></div><div class="nm" style="left:52.60px;top:22.30px">Honey<br>Comb</div><div class="av" style="left:64.52px;top:14.20px"><i></i><b></b></div><div class="nm" style="left:63.02px;top:22.30px">Ice<br>Cream</div><div class="av" style="left:74.94px;top:14.20px"><i></i><b></b></div><div class="abs" style="left:79.94px;top:18.70px;width:2.6px;height:2.6px;border-radius:50%;background:#7e3218"></div><div class="nm" style="left:73.44px;top:22.30px">Jelly<br>Bean</div><div class="av" style="left:85.36px;top:14.20px"><i></i><b></b></div><div class="abs" style="left:90.36px;top:18.70px;width:2.6px;height:2.6px;border-radius:50%;background:#7e3218"></div><div class="nm" style="left:83.86px;top:22.30px">KitKat</div><div class="av" style="left:95.78px;top:14.20px"><i></i><b></b></div><div class="nm" style="left:94.28px;top:22.30px">Lollipop</div><div class="av" style="left:106.20px;top:14.20px"><i></i><b></b></div><div class="nm" style="left:104.70px;top:22.30px">Marshmal<br>low</div><div class="card" style="left:3.80px;top:35.00px;width:42.7px;height:8px;background:#1e171c"></div><div class="ct" style="left:7.80px;top:37.50px">Headlines</div><div class="tx" style="left:39.60px;top:36.90px;width:4px;text-align:center;font-size:3.4px;line-height:4px;font-weight:bold;color:#f1e9ee">+</div><div class="card" style="left:48.70px;top:35.00px;width:42.7px;height:8px;background:#1e171c"></div><div class="ct" style="left:52.70px;top:37.50px">New APIs & Libraries</div><div class="tx" style="left:84.50px;top:36.90px;width:4px;text-align:center;font-size:3.4px;line-height:4px;font-weight:bold;color:#f1e9ee">+</div><div class="card" style="left:93.70px;top:35.00px;width:42.7px;height:8px;background:#1e171c"></div><div class="ct" style="left:97.70px;top:37.50px">Accessibility</div><div class="card" style="left:3.80px;top:45.90px;width:42.7px;height:8px;background:#1e171c"></div><div class="ct" style="left:7.80px;top:48.40px">UI</div><div class="ck" style="left:38.40px;top:46.70px;background:#8b2a9b"></div><svg class="abs" style="left:40.00px;top:48.40px" width="3.2" height="3" viewBox="0 0 10 9"><path d="M1 5 3.8 7.6 9 1.4" stroke="#f5d9f5" stroke-width="1.5" fill="none"/></svg><div class="card" style="left:48.70px;top:45.90px;width:42.7px;height:8px;background:#1e171c"></div><div class="ct" style="left:52.70px;top:48.40px">Wear OS</div><div class="ck" style="left:83.30px;top:46.70px;background:#8b2a9b"></div><svg class="abs" style="left:84.90px;top:48.40px" width="3.2" height="3" viewBox="0 0 10 9"><path d="M1 5 3.8 7.6 9 1.4" stroke="#f5d9f5" stroke-width="1.5" fill="none"/></svg><div class="card" style="left:93.70px;top:45.90px;width:42.7px;height:8px;background:#1e171c"></div><div class="ct" style="left:97.70px;top:48.40px">UI</div><div class="card" style="left:3.80px;top:56.80px;width:42.7px;height:8px;background:#1e171c"></div><div class="ct" style="left:7.80px;top:59.30px">Android Studio</div><div class="ck" style="left:38.40px;top:57.60px;background:#8b2a9b"></div><svg class="abs" style="left:40.00px;top:59.30px" width="3.2" height="3" viewBox="0 0 10 9"><path d="M1 5 3.8 7.6 9 1.4" stroke="#f5d9f5" stroke-width="1.5" fill="none"/></svg><div class="card" style="left:48.70px;top:56.80px;width:42.7px;height:8px;background:#1e171c"></div><div class="ct" style="left:52.70px;top:59.30px">Compose</div><div class="ck" style="left:83.30px;top:57.60px;background:#8b2a9b"></div><svg class="abs" style="left:84.90px;top:59.30px" width="3.2" height="3" viewBox="0 0 10 9"><path d="M1 5 3.8 7.6 9 1.4" stroke="#f5d9f5" stroke-width="1.5" fill="none"/></svg><div class="card" style="left:93.70px;top:56.80px;width:42.7px;height:8px;background:#1e171c"></div><div class="ct" style="left:97.70px;top:59.30px">Testing</div><div class="abs" style="left:24.80000000000001px;top:70.89999999999999px;width:59.2px;height:6.7px;border-radius:3.4px;background:#ffa9fe"></div><div class="tx" style="left:24.80000000000001px;top:72.8px;width:59.2px;text-align:center;font-size:2.3px;line-height:3px;font-weight:bold;color:#5a005f">Done</div><div class="abs" style="left:4px;top:81.8px;width:102px;height:30px;background:#073042;border-radius:1.6px;overflow:hidden"><div class="tx" style="left:4.6px;top:1.65px;font-size:8.8px;line-height:8.8px;font-weight:bold;color:#efe9cf;letter-spacing:0.15px">One Million</div><div class="tx" style="left:4.6px;top:12.85px;font-size:8.8px;line-height:8.8px;font-weight:bold;color:#efe9cf;letter-spacing:0.15px">Subscribers</div><svg class="abs" style="left:62px;top:0" width="42" height="30" viewBox="0 0 42 30"><g fill="#7aa7d9"><rect x="3" y="20" width="1.6" height=".9" transform="rotate(30 3 20)"/><rect x="8" y="14" width="1.6" height=".9" transform="rotate(-40 8 14)"/><rect x="12" y="22" width="1.8" height=".9" transform="rotate(60 12 22)"/><rect x="16" y="9" width="1.6" height=".9" transform="rotate(20 16 9)"/><rect x="33" y="8" width="1.8" height=".9" transform="rotate(-30 33 8)"/><rect x="36" y="17" width="1.6" height=".9" transform="rotate(50 36 17)"/><rect x="20" y="3" width="1.4" height=".9"/></g><g fill="#d9d4ee"><rect x="6" y="24" width="1.6" height=".9" transform="rotate(-20 6 24)"/><rect x="14" y="17" width="1.6" height=".9" transform="rotate(70 14 17)"/><rect x="31" y="13" width="1.6" height=".9" transform="rotate(40 31 13)"/><rect x="37" y="5" width="1.4" height=".9" transform="rotate(-60 37 5)"/><rect x="10" y="27" width="1.4" height=".9"/></g><g fill="#f2b84b"><rect x="4" y="27" width="1.4" height=".9" transform="rotate(45 4 27)"/><rect x="17" y="25" width="1.4" height=".9" transform="rotate(-45 17 25)"/><rect x="35" y="24" width="1.4" height=".9" transform="rotate(20 35 24)"/></g><path d="M14.600 15.600 18.400 20M36.600 13 33.400 18.600" stroke="#3ddc84" stroke-width="1.1" stroke-linecap="round"/><path d="M13.500 30C13.500 22 20 16.800 28 16.800S42.500 22 42.500 30z" fill="#3ddc84"/><path d="M22.3 6.6 19.6 19.4 28.6 18z" fill="#f86734"/><circle cx="19.400" cy="25.400" r=".9" fill="#073042"/><circle cx="29.400" cy="25" r=".9" fill="#073042"/><path d="M21 28q3.400 1 7-.2" stroke="#073042" stroke-width=".5" fill="none"/></svg></div><div class="abs" style="left:6.600000000000023px;top:114.89999999999999px;width:1.6px;height:1.8px;border-radius:.8px .8px 0 0;background:#d9cfd6"></div><div class="tx" style="left:10.399999999999977px;top:114.7px;font-size:1.9px;line-height:2.4px;color:#cfc4cb">1ST JAN</div><div class="tx" style="left:6.399999999999977px;top:119.89999999999999px;font-size:3.95px;line-height:5px;color:#f3ecf1">Thanks for helping us reach 1M YouTube</div><div class="abs" style="left:0;top:124.7px;width:110px;height:13px;background:#1f181d"></div><div class="abs" style="left:8px;top:127.50000000000001px;width:11.6px;height:4.6px;border-radius:2.3px;background:#8b2a9b"></div><div class="abs" style="left:12.600000000000023px;top:128.89999999999998px;width:2.4px;height:1.7px;background:#f7e3f6;border-radius:.3px"></div><div class="abs" style="left:39.89999999999998px;top:128.5px;width:2.6px;height:2.4px;border:.45px solid #cfc4cb;border-radius:.4px;opacity:.7"></div><div class="abs" style="left:67.0px;top:128.5px;width:2.6px;height:2.4px;border:.45px solid #cfc4cb;border-radius:.4px;opacity:.7"></div><div class="abs" style="left:94.40000000000009px;top:128.5px;width:2.6px;height:2.4px;border:.45px solid #cfc4cb;border-radius:.4px;opacity:.7"></div><div class="tx" style="left:4px;top:132.8px;width:20px;text-align:center;font-size:1.9px;line-height:2.4px;color:#cfc4cb">For you</div><div class="tx" style="left:31.19999999999999px;top:132.8px;width:20px;text-align:center;font-size:1.9px;line-height:2.4px;color:#cfc4cb">Episodes</div><div class="tx" style="left:58.30000000000001px;top:132.8px;width:20px;text-align:center;font-size:1.9px;line-height:2.4px;color:#cfc4cb">Saved</div><div class="tx" style="left:85.70000000000005px;top:132.8px;width:20px;text-align:center;font-size:1.9px;line-height:2.4px;color:#cfc4cb">Interests</div></div><div class="pl" style="left:571.2px;top:56.8px">ForYouScreenPreview - Pho...</div><svg class="abs" style="left:658.2px;top:57.4px" width="5.6" height="7" viewBox="0 0 11 14"><rect x=".5" y=".5" width="10" height="13" fill="#9fa3a6"/><path d="M5 1.5h1.2v11H5z" fill="#2d2e2f"/><circle cx="7.6" cy="4.2" r="1.3" fill="#2d2e2f"/><path d="M1.6 8h2.4v4H1.6z" fill="#2d2e2f"/></svg><svg class="abs" style="left:668px;top:57.4px" width="6" height="7" viewBox="0 0 12 14"><rect x="1.4" y="1" width="6.4" height="11" rx="1" fill="none" stroke="#b4b8ba" stroke-width="1.5"/><path d="M3 10h3.2" stroke="#b4b8ba" stroke-width="1"/><circle cx="8.8" cy="10.4" r="2.6" fill="#4fae56"/></svg><div class="pv lt" style="left:571.2px;top:66.7px;width:103.9px;height:58.7px;background:#f8ecf7"><div class="tx" style="left:0;top:4.299999999999997px;width:103.9px;text-align:center;font-size:2.5px;line-height:3.6px;font-weight:bold;color:#1d1a1d">What are you interested in?</div><div class="tx" style="left:0;top:8.399999999999997px;width:103.9px;text-align:center;font-size:2.35px;line-height:2.8px;color:#4a444a">Updates from topics you follow will appear here. Follow some things to get started.</div><div class="av" style="left:1.60px;top:13.80px"><i></i><b></b></div><div class="nm" style="left:0.10px;top:21.90px">Cup<br>Cake</div><div class="av" style="left:12.00px;top:13.80px"><i></i><b></b></div><div class="abs" style="left:17.00px;top:18.30px;width:2.6px;height:2.6px;border-radius:50%;background:#eac4df"></div><div class="nm" style="left:10.50px;top:21.90px">Donut</div><div class="av" style="left:22.40px;top:13.80px"><i></i><b></b></div><div class="abs" style="left:27.40px;top:18.30px;width:2.6px;height:2.6px;border-radius:50%;background:#eac4df"></div><div class="nm" style="left:20.90px;top:21.90px">Eclair</div><div class="av" style="left:32.80px;top:13.80px"><i></i><b></b></div><div class="nm" style="left:31.30px;top:21.90px">Froyo</div><div class="av" style="left:43.20px;top:13.80px"><i></i><b></b></div><div class="nm" style="left:41.70px;top:21.90px">Ginger<br>Bread</div><div class="av" style="left:53.60px;top:13.80px"><i></i><b></b></div><div class="abs" style="left:58.60px;top:18.30px;width:2.6px;height:2.6px;border-radius:50%;background:#eac4df"></div><div class="nm" style="left:52.10px;top:21.90px">Honey<br>Comb</div><div class="av" style="left:64.00px;top:13.80px"><i></i><b></b></div><div class="nm" style="left:62.50px;top:21.90px">Ice<br>Cream</div><div class="av" style="left:74.40px;top:13.80px"><i></i><b></b></div><div class="abs" style="left:79.40px;top:18.30px;width:2.6px;height:2.6px;border-radius:50%;background:#eac4df"></div><div class="nm" style="left:72.90px;top:21.90px">Jelly<br>Bean</div><div class="av" style="left:84.80px;top:13.80px"><i></i><b></b></div><div class="abs" style="left:89.80px;top:18.30px;width:2.6px;height:2.6px;border-radius:50%;background:#eac4df"></div><div class="nm" style="left:83.30px;top:21.90px">KitKat</div><div class="av" style="left:95.20px;top:13.80px"><i></i><b></b></div><div class="nm" style="left:93.70px;top:21.90px">Lollipop</div><div class="card" style="left:3.60px;top:34.20px;width:42.8px;height:8.2px;background:#fffbff"></div><div class="ct" style="left:7.60px;top:36.80px">Headlines</div><div class="tx" style="left:39.50px;top:36.20px;width:4px;text-align:center;font-size:3.4px;line-height:4px;font-weight:bold;color:#1d1a1d">+</div><div class="card" style="left:48.90px;top:34.20px;width:42.8px;height:8.2px;background:#fffbff"></div><div class="ct" style="left:52.90px;top:36.80px">New APIs & Libraries</div><div class="tx" style="left:84.80px;top:36.20px;width:4px;text-align:center;font-size:3.4px;line-height:4px;font-weight:bold;color:#1d1a1d">+</div><div class="card" style="left:94.00px;top:34.20px;width:42.8px;height:8.2px;background:#fffbff"></div><div class="ct" style="left:98.00px;top:36.80px">Accessibility</div><div class="abs" style="left:0;top:45.0px;width:103.9px;height:14px;background:#fefbfe"></div><div class="abs" style="left:7.7999999999999545px;top:48.3px;width:10.4px;height:4.4px;border-radius:2.2px;background:#f9c9f6"></div><div class="abs" style="left:11.799999999999955px;top:49.5px;width:2.4px;height:1.8px;background:#3b0f40;border-radius:.3px"></div><div class="abs" style="left:37.799999999999955px;top:49.099999999999994px;width:2.6px;height:2.4px;border:.45px solid #7a727a;border-radius:.4px;opacity:.85"></div><div class="abs" style="left:63.700000000000045px;top:49.099999999999994px;width:2.6px;height:2.4px;border:.45px solid #7a727a;border-radius:.4px;opacity:.85"></div><div class="abs" style="left:89.79999999999995px;top:49.099999999999994px;width:2.6px;height:2.4px;border:.45px solid #7a727a;border-radius:.4px;opacity:.85"></div><div class="tx" style="left:3.0px;top:54.2px;width:20px;text-align:center;font-size:1.9px;line-height:2.4px;color:#5a525a">For you</div><div class="tx" style="left:29.09999999999991px;top:54.2px;width:20px;text-align:center;font-size:1.9px;line-height:2.4px;color:#5a525a">Episodes</div><div class="tx" style="left:55.0px;top:54.2px;width:20px;text-align:center;font-size:1.9px;line-height:2.4px;color:#5a525a">Saved</div><div class="tx" style="left:81.09999999999991px;top:54.2px;width:20px;text-align:center;font-size:1.9px;line-height:2.4px;color:#5a525a">Interests</div></div><div class="pl" style="left:441px;top:227.0px">ForYouScreenPreview - Tablet</div><svg class="abs" style="left:631.8px;top:227.6px" width="5.6" height="7" viewBox="0 0 11 14"><rect x=".5" y=".5" width="10" height="13" fill="#9fa3a6"/><path d="M5 1.5h1.2v11H5z" fill="#2d2e2f"/><circle cx="7.6" cy="4.2" r="1.3" fill="#2d2e2f"/><path d="M1.6 8h2.4v4H1.6z" fill="#2d2e2f"/></svg><svg class="abs" style="left:641.8px;top:227.6px" width="6" height="7" viewBox="0 0 12 14"><rect x="1.4" y="1" width="6.4" height="11" rx="1" fill="none" stroke="#b4b8ba" stroke-width="1.5"/><path d="M3 10h3.2" stroke="#b4b8ba" stroke-width="1"/><circle cx="8.8" cy="10.4" r="2.6" fill="#4fae56"/></svg><div class="pv lt" style="left:441px;top:236.7px;width:208.3px;height:130.1px;background:#f8ecf7"><div class="tx" style="left:0;top:4.400000000000023px;width:208.3px;text-align:center;font-size:2.5px;line-height:3.6px;font-weight:bold;color:#1d1a1d">What are you interested in?</div><div class="tx" style="left:0;top:8.200000000000022px;width:208.3px;text-align:center;font-size:2.35px;line-height:2.8px;color:#4a444a">Updates from topics you follow will appear here. Follow some things to get started.</div><div class="av" style="left:1.80px;top:13.40px"><i></i><b></b></div><div class="nm" style="left:0.30px;top:21.50px">Cup<br>Cake</div><div class="av" style="left:12.20px;top:13.40px"><i></i><b></b></div><div class="abs" style="left:17.20px;top:17.90px;width:2.6px;height:2.6px;border-radius:50%;background:#eac4df"></div><div class="nm" style="left:10.70px;top:21.50px">Donut</div><div class="av" style="left:22.60px;top:13.40px"><i></i><b></b></div><div class="abs" style="left:27.60px;top:17.90px;width:2.6px;height:2.6px;border-radius:50%;background:#eac4df"></div><div class="nm" style="left:21.10px;top:21.50px">Eclair</div><div class="av" style="left:33.00px;top:13.40px"><i></i><b></b></div><div class="nm" style="left:31.50px;top:21.50px">Froyo</div><div class="av" style="left:43.40px;top:13.40px"><i></i><b></b></div><div class="nm" style="left:41.90px;top:21.50px">Ginger<br>Bread</div><div class="av" style="left:53.80px;top:13.40px"><i></i><b></b></div><div class="abs" style="left:58.80px;top:17.90px;width:2.6px;height:2.6px;border-radius:50%;background:#eac4df"></div><div class="nm" style="left:52.30px;top:21.50px">Honey<br>Comb</div><div class="av" style="left:64.20px;top:13.40px"><i></i><b></b></div><div class="nm" style="left:62.70px;top:21.50px">Ice<br>Cream</div><div class="av" style="left:74.60px;top:13.40px"><i></i><b></b></div><div class="abs" style="left:79.60px;top:17.90px;width:2.6px;height:2.6px;border-radius:50%;background:#eac4df"></div><div class="nm" style="left:73.10px;top:21.50px">Jelly<br>Bean</div><div class="av" style="left:85.00px;top:13.40px"><i></i><b></b></div><div class="abs" style="left:90.00px;top:17.90px;width:2.6px;height:2.6px;border-radius:50%;background:#eac4df"></div><div class="nm" style="left:83.50px;top:21.50px">KitKat</div><div class="av" style="left:95.40px;top:13.40px"><i></i><b></b></div><div class="nm" style="left:93.90px;top:21.50px">Lollipop</div><div class="av" style="left:105.80px;top:13.40px"><i></i><b></b></div><div class="nm" style="left:104.30px;top:21.50px">Marshmal<br>low</div><div class="av" style="left:116.20px;top:13.40px"><i></i><b></b></div><div class="abs" style="left:121.20px;top:17.90px;width:2.6px;height:2.6px;border-radius:50%;background:#eac4df"></div><div class="nm" style="left:114.70px;top:21.50px">Nougat</div><div class="av" style="left:126.60px;top:13.40px"><i></i><b></b></div><div class="nm" style="left:125.10px;top:21.50px">Oreo</div><div class="av" style="left:137.00px;top:13.40px"><i></i><b></b></div><div class="nm" style="left:135.50px;top:21.50px">Pie</div><div class="av" style="left:147.40px;top:13.40px"><i></i><b></b></div><div class="abs" style="left:152.40px;top:17.90px;width:2.6px;height:2.6px;border-radius:50%;background:#eac4df"></div><div class="nm" style="left:145.90px;top:21.50px">Quince<br>Tart</div><div class="av" style="left:157.80px;top:13.40px"><i></i><b></b></div><div class="nm" style="left:156.30px;top:21.50px">Red<br>Velvet</div><div class="av" style="left:168.20px;top:13.40px"><i></i><b></b></div><div class="nm" style="left:166.70px;top:21.50px">Snow<br>Cone</div><div class="av" style="left:178.60px;top:13.40px"><i></i><b></b></div><div class="abs" style="left:183.60px;top:17.90px;width:2.6px;height:2.6px;border-radius:50%;background:#eac4df"></div><div class="nm" style="left:177.10px;top:21.50px">Tiramis<br>u</div><div class="card" style="left:3.80px;top:34.00px;width:42.6px;height:8.2px;background:#fffbff"></div><div class="ct" style="left:7.80px;top:36.60px">Headlines</div><div class="tx" style="left:39.50px;top:36.00px;width:4px;text-align:center;font-size:3.4px;line-height:4px;font-weight:bold;color:#1d1a1d">+</div><div class="card" style="left:48.70px;top:34.00px;width:42.6px;height:8.2px;background:#fffbff"></div><div class="ct" style="left:52.70px;top:36.60px">New APIs & Libraries</div><div class="tx" style="left:84.40px;top:36.00px;width:4px;text-align:center;font-size:3.4px;line-height:4px;font-weight:bold;color:#1d1a1d">+</div><div class="card" style="left:93.60px;top:34.00px;width:42.6px;height:8.2px;background:#fffbff"></div><div class="ct" style="left:97.60px;top:36.60px">Accessibility</div><div class="tx" style="left:129.30px;top:36.00px;width:4px;text-align:center;font-size:3.4px;line-height:4px;font-weight:bold;color:#1d1a1d">+</div><div class="card" style="left:138.50px;top:34.00px;width:42.6px;height:8.2px;background:#fffbff"></div><div class="ct" style="left:142.50px;top:36.60px">Camera & Media</div><div class="tx" style="left:174.20px;top:36.00px;width:4px;text-align:center;font-size:3.4px;line-height:4px;font-weight:bold;color:#1d1a1d">+</div><div class="card" style="left:183.40px;top:34.00px;width:42.6px;height:8.2px;background:#fffbff"></div><div class="ct" style="left:187.40px;top:36.60px">Publishing & Distribution</div><div class="card" style="left:3.80px;top:45.10px;width:42.6px;height:8.2px;background:#fffbff"></div><div class="ct" style="left:7.80px;top:47.70px">UI</div><div class="ck" style="left:38.30px;top:46.00px;background:#fbd3f8"></div><svg class="abs" style="left:39.90px;top:47.70px" width="3.2" height="3" viewBox="0 0 10 9"><path d="M1 5 3.8 7.6 9 1.4" stroke="#3b0f40" stroke-width="1.5" fill="none"/></svg><div class="card" style="left:48.70px;top:45.10px;width:42.6px;height:8.2px;background:#fffbff"></div><div class="ct" style="left:52.70px;top:47.70px">Wear OS</div><div class="ck" style="left:83.20px;top:46.00px;background:#fbd3f8"></div><svg class="abs" style="left:84.80px;top:47.70px" width="3.2" height="3" viewBox="0 0 10 9"><path d="M1 5 3.8 7.6 9 1.4" stroke="#3b0f40" stroke-width="1.5" fill="none"/></svg><div class="card" style="left:93.60px;top:45.10px;width:42.6px;height:8.2px;background:#fffbff"></div><div class="ct" style="left:97.60px;top:47.70px">UI</div><div class="tx" style="left:129.30px;top:47.10px;width:4px;text-align:center;font-size:3.4px;line-height:4px;font-weight:bold;color:#1d1a1d">+</div><div class="card" style="left:138.50px;top:45.10px;width:42.6px;height:8.2px;background:#fffbff"></div><div class="ct" style="left:142.50px;top:47.70px">Data Storage</div><div class="tx" style="left:174.20px;top:47.10px;width:4px;text-align:center;font-size:3.4px;line-height:4px;font-weight:bold;color:#1d1a1d">+</div><div class="card" style="left:183.40px;top:45.10px;width:42.6px;height:8.2px;background:#fffbff"></div><div class="ct" style="left:187.40px;top:47.70px">Tools</div><div class="card" style="left:3.80px;top:56.20px;width:42.6px;height:8.2px;background:#fffbff"></div><div class="ct" style="left:7.80px;top:58.80px">Android Studio</div><div class="ck" style="left:38.30px;top:57.10px;background:#fbd3f8"></div><svg class="abs" style="left:39.90px;top:58.80px" width="3.2" height="3" viewBox="0 0 10 9"><path d="M1 5 3.8 7.6 9 1.4" stroke="#3b0f40" stroke-width="1.5" fill="none"/></svg><div class="card" style="left:48.70px;top:56.20px;width:42.6px;height:8.2px;background:#fffbff"></div><div class="ct" style="left:52.70px;top:58.80px">Compose</div><div class="ck" style="left:83.20px;top:57.10px;background:#fbd3f8"></div><svg class="abs" style="left:84.80px;top:58.80px" width="3.2" height="3" viewBox="0 0 10 9"><path d="M1 5 3.8 7.6 9 1.4" stroke="#3b0f40" stroke-width="1.5" fill="none"/></svg><div class="card" style="left:93.60px;top:56.20px;width:42.6px;height:8.2px;background:#fffbff"></div><div class="ct" style="left:97.60px;top:58.80px">Testing</div><div class="ck" style="left:128.10px;top:57.10px;background:#fbd3f8"></div><svg class="abs" style="left:129.70px;top:58.80px" width="3.2" height="3" viewBox="0 0 10 9"><path d="M1 5 3.8 7.6 9 1.4" stroke="#3b0f40" stroke-width="1.5" fill="none"/></svg><div class="card" style="left:138.50px;top:56.20px;width:42.6px;height:8.2px;background:#fffbff"></div><div class="ct" style="left:142.50px;top:58.80px">Kotlin</div><div class="tx" style="left:174.20px;top:58.20px;width:4px;text-align:center;font-size:3.4px;line-height:4px;font-weight:bold;color:#1d1a1d">+</div><div class="card" style="left:183.40px;top:56.20px;width:42.6px;height:8.2px;background:#fffbff"></div><div class="ct" style="left:187.40px;top:58.80px">Publishing & Distribution</div><div class="abs" style="left:74.5px;top:70.90000000000003px;width:58.9px;height:6px;border-radius:3px;background:#8c4190"></div><div class="tx" style="left:74.5px;top:72.5px;width:58.9px;text-align:center;font-size:2.3px;line-height:3px;font-weight:bold;color:#fff">Done</div><div class="abs" style="left:3.8000000000000114px;top:81.90000000000003px;width:200.2px;height:28.8px;background:#073042;border-radius:1.6px;overflow:hidden"><div class="tx" style="left:9.7px;top:-9.6px;font-size:17.7px;line-height:17.7px;font-weight:bold;color:#efe9cf;letter-spacing:0px">One Million</div><div class="tx" style="left:9.7px;top:11.1px;font-size:17.7px;line-height:17.7px;font-weight:bold;color:#efe9cf;letter-spacing:0px">Subscribers</div><svg class="abs" style="left:118px;top:0" width="82" height="29" viewBox="0 0 82 29"><g fill="#7aa7d9"><rect x="6" y="12" width="3.4" height="1.6" transform="rotate(20 6 12)"/><rect x="20" y="13" width="3.2" height="1.6" transform="rotate(10 20 13)"/><rect x="31" y="14" width="3.6" height="1.6" transform="rotate(15 31 14)"/><rect x="70" y="8" width="3.2" height="1.6" transform="rotate(30 70 8)"/><rect x="64" y="15" width="3.2" height="1.6" transform="rotate(-20 64 15)"/><rect x="42" y="11" width="3.6" height="1.6" transform="rotate(50 42 11)"/></g><g fill="#d9d4ee"><rect x="7" y="16" width="3.2" height="1.6" transform="rotate(-30 7 16)"/><rect x="27" y="10" width="3" height="1.6" transform="rotate(70 27 10)"/><rect x="72" y="17" width="3.4" height="1.6" transform="rotate(-70 72 17)"/><rect x="62" y="2" width="2.6" height="1.6" transform="rotate(70 62 2)"/><rect x="68" y="11" width="3" height="1.6" transform="rotate(20 68 11)"/><rect x="14" y="24" width="2.8" height="1.6" transform="rotate(-70 14 24)"/></g><g fill="#f2b84b"><rect x="4" y="26" width="2.6" height="1.5" transform="rotate(45 4 26)"/><rect x="23" y="19" width="2.6" height="1.5" transform="rotate(-45 23 19)"/><rect x="76" y="10" width="2.6" height="1.5" transform="rotate(60 76 10)"/><rect x="52" y="4" width="2" height="1.4" fill="#e26aa2"/></g><path d="M35.2 17.6 40 24M64.4 13.4 61 21.6" stroke="#3ddc84" stroke-width="1.8" stroke-linecap="round"/><path d="M37 29.5C38 25 44 21.8 52 21.8S70 24.4 75 29.5z" fill="#3ddc84"/><path d="M48.7 -1 42.6 22.4 60.4 19.6z" fill="#f86734"/></svg></div><div class="abs" style="left:6.600000000000023px;top:113.69999999999999px;width:1.6px;height:1.8px;border-radius:.8px .8px 0 0;background:#3b343b"></div><div class="tx" style="left:10.399999999999977px;top:113.5px;font-size:1.9px;line-height:2.4px;color:#4a444a">1ST JAN</div><div class="abs" style="left:0;top:117.10000000000002px;width:208.3px;height:14px;background:#fefbfe"></div><div class="abs" style="left:20.69999999999999px;top:120.10000000000002px;width:10.4px;height:4.2px;border-radius:2.1px;background:#f9c9f6"></div><div class="abs" style="left:24.69999999999999px;top:121.19999999999999px;width:2.4px;height:1.8px;background:#3b0f40;border-radius:.3px"></div><div class="abs" style="left:76.70000000000005px;top:120.69999999999999px;width:2.6px;height:2.4px;border:.45px solid #7a727a;border-radius:.4px;opacity:.85"></div><div class="abs" style="left:128.70000000000005px;top:120.69999999999999px;width:2.6px;height:2.4px;border:.45px solid #7a727a;border-radius:.4px;opacity:.85"></div><div class="abs" style="left:180.70000000000005px;top:120.69999999999999px;width:2.6px;height:2.4px;border:.45px solid #7a727a;border-radius:.4px;opacity:.85"></div><div class="tx" style="left:16px;top:125.90000000000003px;width:20px;text-align:center;font-size:1.9px;line-height:2.4px;color:#5a525a">For you</div><div class="tx" style="left:68px;top:125.90000000000003px;width:20px;text-align:center;font-size:1.9px;line-height:2.4px;color:#5a525a">Episodes</div><div class="tx" style="left:120px;top:125.90000000000003px;width:20px;text-align:center;font-size:1.9px;line-height:2.4px;color:#5a525a">Saved</div><div class="tx" style="left:172px;top:125.90000000000003px;width:20px;text-align:center;font-size:1.9px;line-height:2.4px;color:#5a525a">Interests</div></div><div class="abs" style="left:697px;top:336.6px;width:12px;height:11.2px;border:.5px solid #3f4244;border-radius:1.2px;background:#2d2e2f"></div><svg class="abs" style="left:700px;top:339px" width="6.4" height="6.8" viewBox="0 0 13 14"><path d="M3.4 6V2.6a.9.9 0 0 1 1.8 0V1.6a.9.9 0 0 1 1.8 0v.6a.9.9 0 0 1 1.8 0v1a.9.9 0 0 1 1.8 0V9c0 2.6-1.6 4.4-4.2 4.4-2 0-3.2-.8-4.2-2.4L.6 8.400c-.4-.8.6-1.600 1.400-.8z" fill="#e6e8e9"/></svg><div class="abs" style="left:697px;top:351px;width:12px;height:45.2px;border:.5px solid #3f4244;border-radius:1.2px;background:#2d2e2f"></div><div class="abs" style="left:700.6px;top:357px;width:4.8px;height:.9px;background:#c8cacc"></div><div class="abs" style="left:702.55px;top:355.05px;width:.9px;height:4.8px;background:#c8cacc"></div><div class="abs" style="left:700.8px;top:368.2px;width:4.4px;height:.9px;background:#c8cacc"></div><div class="ui" style="left:697px;top:376.2px;width:12px;text-align:center;font-size:4.6px;font-weight:bold;color:#c8cacc">1:1</div><svg class="abs" style="left:700px;top:388.6px" width="6" height="5.6" viewBox="0 0 12 11"><rect x=".8" y=".8" width="10.400" height="9.4" fill="none" stroke="#c8cacc" stroke-width="1.5"/><path d="M3 8 8.6 3M5.6 3h3v3" stroke="#c8cacc" stroke-width="1.2" fill="none"/></svg></div></body></html>
